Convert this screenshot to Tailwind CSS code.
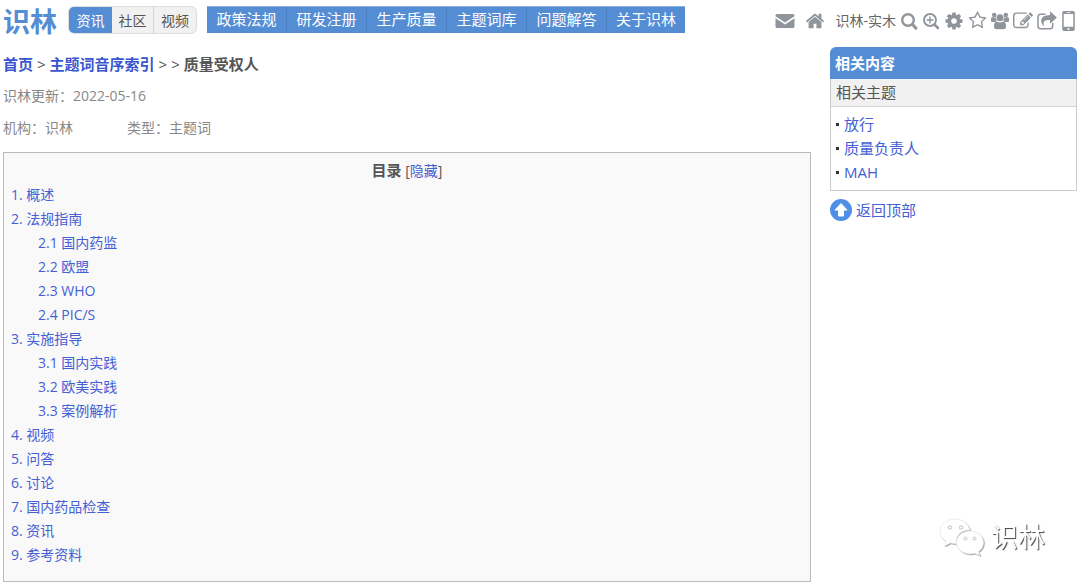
<!DOCTYPE html>
<html lang="zh-CN">

<head>
    <meta charset="UTF-8" />
    <meta name="viewport" content="width=device-width, initial-scale=1.0" />
    <title>质量受权人 - 识林</title>
    <script src="https://cdn.jsdelivr.net/npm/@tailwindcss/browser@4"></script>
</head>

<body class="bg-white px-[3px] font-['Open_Sans','Noto_Sans_CJK_SC',sans-serif] text-[14px] leading-6 text-[#555]">
    <!-- Header -->
    <header class="flex items-center h-10">
        <a href="#" class="w-[65px] pt-[3px] text-[27px] leading-10 font-bold text-[#548dd4]">识林</a>

        <div class="flex h-7 rounded-md border border-[#ddd] overflow-hidden bg-[#f1f1f1] leading-7">
            <button class="w-[43px] bg-[#548dd4] text-white">资讯</button>
            <button class="w-[42px] border-r border-[#d5d5d5]">社区</button>
            <button class="w-[42px]">视频</button>
        </div>

        <nav class="flex ml-[10px] h-7 border-t border-b border-t-[#86aee2] border-b-white bg-[#548dd4] bg-clip-padding text-[15px] leading-6 text-center text-white">
            <a href="#" class="w-20 border-r border-[#4a80c4]">政策法规</a>
            <a href="#" class="w-20 border-r border-[#4a80c4]">研发注册</a>
            <a href="#" class="w-20 border-r border-[#4a80c4]">生产质量</a>
            <a href="#" class="w-20 border-r border-[#4a80c4]">主题词库</a>
            <a href="#" class="w-20 border-r border-[#4a80c4]">问题解答</a>
            <a href="#" class="w-[78px]">关于识林</a>
        </nav>

        <!-- User tools -->
        <div class="flex items-center gap-1 ml-auto pr-px pt-px text-[#8f959b]">
            <a href="#" aria-label="消息" class="mr-[6px]">
                <svg class="w-5 h-5" viewBox="0 0 20 20" fill="currentColor"><path d="M2 3h16q1.500 0 1.500 1.500v.7L10 11.500.5 5.200v-.7Q.5 3 2 3zM.5 7.300L10 13.600l9.500-6.300v8.200q0 1.500-1.500 1.500H2q-1.500 0-1.500-1.500z" /></svg>
            </a>
            <a href="#" aria-label="主页" class="mr-[6px]">
                <svg class="w-5 h-5" viewBox="0 0 1792 1792" fill="currentColor"><path d="M1472 992v480q0 26-19 45t-45 19h-384v-384h-256v384h-384q-26 0-45-19t-19-45v-480q0-1 .5-3t.5-3l575-474 575 474q1 2 1 6zm223-69l-62 74q-8 9-21 11h-3q-13 0-21-7l-692-577-692 577q-12 8-24 7-13-2-21-11l-62-74q-8-10-7-23.500t11-21.500l719-599q32-26 76-26t76 26l244 204v-195q0-14 9-23t23-9h192q14 0 23 9t9 23v408l219 182q10 8 11 21.500t-7 23.500z" /></svg>
            </a>
            <a href="#" class="text-[#666]">识林-实木</a>
            <a href="#" aria-label="搜索">
                <svg class="w-[18px] h-[18px]" viewBox="0 0 18 18" fill="none" stroke="currentColor" stroke-linecap="round"><circle cx="8" cy="8" r="5.800" stroke-width="2.400" /><path d="M12.500 12.500l3.400 3.600" stroke-width="3" /></svg>
            </a>
            <a href="#" aria-label="放大">
                <svg class="w-[18px] h-[18px]" viewBox="0 0 18 18" fill="none" stroke="currentColor" stroke-linecap="round"><circle cx="8" cy="8" r="6" stroke-width="1.900" /><path d="M12.600 12.600l3.300 3.400" stroke-width="2.600" /><path d="M5 8h6M8 5v6" stroke-width="1.400" /></svg>
            </a>
            <a href="#" aria-label="设置">
                <svg class="w-5 h-5" viewBox="0 0 1792 1792" fill="currentColor"><path d="M1152 896q0-106-75-181t-181-75-181 75-75 181 75 181 181 75 181-75 75-181zm512-109v222q0 12-8 23t-20 13l-185 28q-19 54-39 91 35 50 107 138 10 12 10 25t-9 23q-27 37-99 108t-94 71q-12 0-26-9l-138-108q-44 23-91 38-16 136-29 186-7 28-36 28h-222q-14 0-24.500-8.500t-11.500-21.500l-28-184q-49-16-90-37l-141 107q-10 9-25 9-14 0-25-11-126-114-165-168-7-10-7-23 0-12 8-23 15-21 51-66.500t54-70.500q-27-50-41-99l-183-27q-13-2-21-12.500t-8-23.500v-222q0-12 8-23t19-13l186-28q14-46 39-92-40-57-107-138-10-12-10-24 0-10 9-23 26-36 98.500-107.500t94.500-71.500q13 0 26 10l138 107q44-23 91-38 16-136 29-186 7-28 36-28h222q14 0 24.500 8.500t11.500 21.500l28 184q49 16 90 37l142-107q9-9 24-9 13 0 25 10 129 119 165 170 7 8 7 22 0 12-8 23-15 21-51 66.500t-54 70.500q26 50 41 98l183 28q13 2 21 12.500t8 23.500z" /></svg>
            </a>
            <a href="#" aria-label="收藏">
                <svg class="w-[19px] h-[19px]" viewBox="0 0 1792 1792" fill="currentColor"><path d="M1201 1004l306-297-422-62-189-382-189 382-422 62 306 297-73 421 378-199 377 199zm527-357q0 22-26 48l-363 354 86 500q1 7 1 20 0 50-41 50-19 0-40-12l-449-236-449 236q-22 12-40 12-21 0-31.500-14.500t-10.500-35.500q0-6 2-20l86-500-364-354q-25-27-25-48 0-37 56-46l502-73 225-455q19-41 49-41t49 41l225 455 502 73q56 9 56 46z" /></svg>
            </a>
            <a href="#" aria-label="群组">
                <svg class="w-[18px] h-[18px]" viewBox="0 0 18 18" fill="currentColor"><circle cx="3.200" cy="3" r="2.300" /><circle cx="14.800" cy="3" r="2.300" /><circle cx="9" cy="5.800" r="3.500" /><path d="M0 9V7q0-2 1.500-2 2 1 3.400.3-.3 2.500 1 3.900Q4 9.200 3.200 10H1.500Q0 10 0 9zM18 9V7q0-2-1.500-2-2 1-3.400.3.300 2.500-1 3.900 1.900 0 2.700.8h1.700Q18 10 18 9zM5.500 9.500q3.500 2 7 0 2.500.5 2.500 4.500v1q0 2.200-2.500 2.200h-7Q3 17.200 3 15v-1q0-4 2.500-4.500z" /></svg>
            </a>
            <a href="#" aria-label="编辑">
                <svg class="w-5 h-5" viewBox="0 0 1792 1792" fill="currentColor"><path d="M888 1184l116-116-152-152-116 116v56h96v96h56zm440-720q-16-16-33 1l-350 350q-17 17-1 33t33-1l350-350q17-17 1-33zm80 594v190q0 119-84.500 203.500t-203.500 84.500h-832q-119 0-203.500-84.500t-84.500-203.500v-832q0-119 84.500-203.500t203.500-84.500h832q63 0 117 25 15 7 18 23 3 17-9 29l-49 49q-14 14-32 8-23-6-45-6h-832q-66 0-113 47t-47 113v832q0 66 47 113t113 47h832q66 0 113-47t47-113v-126q0-13 9-22l64-64q15-15 35-7t20 29zm-96-738l288 288-672 672h-288v-288zm444 132l-92 92-288-288 92-92q28-28 68-28t68 28l152 152q28 28 28 68t-28 68z" /></svg>
            </a>
            <a href="#" aria-label="分享">
                <svg class="w-5 h-5" viewBox="0 0 20 20" fill="currentColor"><path d="M8 3.200H3.700Q1 3.200 1 6v9q0 2.800 2.700 2.800H13q2.700 0 2.700-2.800v-2.500" fill="none" stroke="currentColor" stroke-width="1.500" stroke-linecap="round" /><path d="M13 1.200q0-1 .9-.3l5.500 5q.6.600 0 1.200l-5.500 5q-.9.600-.9-.4V9q-5.500-.4-6.300 2.300-.4 1.700.5 4.200-3.400-3.100-3-6.500Q4.900 4.200 13 4z" /></svg>
            </a>
            <a href="#" aria-label="手机版">
                <svg class="w-[15px] h-5" viewBox="0 0 15 20" fill="currentColor"><path fill-rule="evenodd" d="M3 0h9q1.800 0 1.800 1.800v16.400Q13.800 20 12 20H3q-1.800 0-1.800-1.800V1.800Q1.200 0 3 0zM2.700 3v12.700h9.600V3zM5.500 1.200v.7h4v-.7zM7.500 17a1 1 0 100 2 1 1 0 000-2z" /></svg>
            </a>
        </div>
    </header>

    <div class="flex items-start gap-[19px]">
        <main class="flex-1">
            <!-- Breadcrumb -->
            <div class="flex gap-1 pt-3 text-[15px] font-bold">
                <a href="#" class="text-[#3a55d0]">首页</a>
                <span class="font-normal">&gt;</span>
                <a href="#" class="text-[#3a55d0]">主题词音序索引</a>
                <span class="font-normal">&gt;</span>
                <span class="font-normal">&gt;</span>
                <h1>质量受权人</h1>
            </div>

            <p class="mt-2 text-[#888]">识林更新：2022-05-16</p>
            <p class="flex gap-[54px] mt-2 text-[#888]"><span>机构：识林</span><span>类型：主题词</span></p>

            <!-- Table of contents -->
            <section class="mt-3 border border-[#bbb] bg-[#f9f9f9] px-[7px] pt-[5px] pb-[14px]">
                <h2 class="text-center"><b class="text-[15px]">目录</b> [<a href="#" class="text-[#4560d4]">隐藏</a>]</h2>
                <ul class="text-[#4560d4]">
                    <li><a href="#">1. 概述</a></li>
                    <li><a href="#">2. 法规指南</a></li>
                    <li class="pl-[27px]"><a href="#">2.1 国内药监</a></li>
                    <li class="pl-[27px]"><a href="#">2.2 欧盟</a></li>
                    <li class="pl-[27px]"><a href="#">2.3 WHO</a></li>
                    <li class="pl-[27px]"><a href="#">2.4 PIC/S</a></li>
                    <li><a href="#">3. 实施指导</a></li>
                    <li class="pl-[27px]"><a href="#">3.1 国内实践</a></li>
                    <li class="pl-[27px]"><a href="#">3.2 欧美实践</a></li>
                    <li class="pl-[27px]"><a href="#">3.3 案例解析</a></li>
                    <li><a href="#">4. 视频</a></li>
                    <li><a href="#">5. 问答</a></li>
                    <li><a href="#">6. 讨论</a></li>
                    <li><a href="#">7. 国内药品检查</a></li>
                    <li><a href="#">8. 资讯</a></li>
                    <li><a href="#">9. 参考资料</a></li>
                </ul>
            </section>
        </main>

        <!-- Sidebar -->
        <aside class="w-[247px] pt-[7px] text-[15px]">
            <h2 class="h-8 rounded-t-md bg-[#548dd4] px-[5px] leading-8 font-bold text-white">相关内容</h2>
            <div class="border border-t-0 border-[#ccc]">
                <h3 class="h-7 border-b border-[#d5d5d5] bg-[#f1f1f1] px-[5px] leading-[26px]">相关主题</h3>
                <ul class="px-[5px] pt-[5px] pb-[6px] text-[#4560d4]">
                    <li class="flex items-center gap-[5px]"><span class="w-[3px] h-[3px] bg-[#333]"></span><a href="#">放行</a></li>
                    <li class="flex items-center gap-[5px]"><span class="w-[3px] h-[3px] bg-[#333]"></span><a href="#">质量负责人</a></li>
                    <li class="flex items-center gap-[5px]"><span class="w-[3px] h-[3px] bg-[#333]"></span><a href="#">MAH</a></li>
                </ul>
            </div>
            <a href="#" class="flex items-center gap-1 mt-[7px] text-[#4560d4]">
                <svg class="w-[22px] h-[22px]" viewBox="0 0 22 22"><circle cx="11" cy="11" r="11" fill="#4f8fe8" /><path d="M11 4.500l6 6.500h-3.500v6h-5v-6H5z" fill="#fff" stroke="#fff" stroke-linejoin="round" /></svg>
                返回顶部
            </a>
        </aside>
    </div>

    <!-- Watermark -->
    <div class="fixed right-[35px] bottom-[29px] flex items-center gap-[7px] text-[27px] leading-10 text-white">
        <svg class="w-[45px] h-10 drop-shadow-[1px_1px_0_#aaa]" viewBox="0 0 45 40" fill="#fff" stroke="#ddd" stroke-width=".5">
            <path d="M16 2C7.500 2 1 7.600 1 14.500c0 4 2.200 7.500 6 9.800L5.500 29l5.800-3q3 .8 6.500.6C16 19 22 13 31 13 29.500 6.500 23.500 2 16 2z" />
            <path d="M31 14c-7.500 0-13.500 5-13.500 11.500S23.500 37 31 37q2.500 0 5-.8l5 2.600-1.400-4.200q5-3.600 5-9.100C44.600 19 38.500 14 31 14z" />
            <g stroke="#888"><circle cx="11" cy="10.500" r="1.700" /><circle cx="22" cy="10.500" r="1.700" /><circle cx="26.500" cy="21.500" r="1.500" /><circle cx="35.500" cy="21.500" r="1.500" /></g>
        </svg>
        <span class="text-shadow-[1px_1px_1px_#444]">识林</span>
    </div>
</body>

</html>
